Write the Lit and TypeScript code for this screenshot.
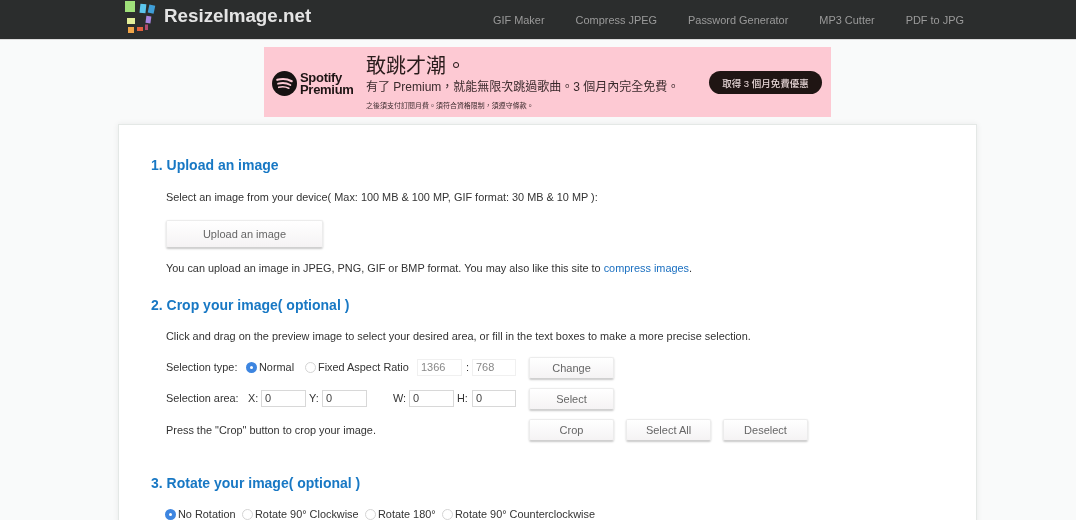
import { LitElement, html, css } from "lit";
import { customElement } from "lit/decorators.js";

@customElement("app-root")
export class AppRoot extends LitElement {
  static styles = css`
    :host { display: block; height: 520px; overflow: hidden; background: #f9fafa; font-family: "Liberation Sans", Arial, sans-serif; color: #333; font-size: 11px; filter: blur(0.3px); }
    .top { height: 39px; background: #2b2d2d; border-bottom: 1px solid #dcdcdc; display: flex; align-items: center; position: relative; box-sizing: content-box; }
    .logo { margin-left: 124px; width: 36px; height: 36px; flex: none; align-self: flex-start; }
    .brand { margin-left: 4px; font-size: 18.8px; font-weight: bold; color: #e4e4e4; position: relative; top: -4px; }
    nav { margin-left: auto; margin-right: 112px; display: flex; gap: 31px; font-size: 10.95px; color: #9a9a9a; }
    .ad { margin: 7px 0 0 264px; width: 567px; height: 70px; background: #fdc9d3; display: flex; align-items: center; box-sizing: border-box; padding-left: 8px; color: #2a1c1c; position: relative; }
    .spot { width: 25px; height: 25px; flex: none; margin-top: 3px; }
    .premium { margin-left: 3px; font-size: 13px; line-height: 12px; font-weight: bold; margin-top: 3px; color: #1d1414; letter-spacing: -0.3px; width: 58px; }
    .copy { margin-left: 8px; font-family: "Noto Sans CJK TC", "Liberation Sans", sans-serif; display: flex; flex-direction: column; margin-top: -2px; }
    .h { font-size: 20px; line-height: 26px; }
    .s { font-family: "Liberation Sans", "Noto Sans CJK TC", sans-serif; font-size: 12px; line-height: 16px; color: #3a2a2c; margin-top: 1px; }
    .f { font-size: 6.9px; line-height: 10px; margin-top: 5px; color: #3a2a2c; letter-spacing: 0.1px; }
    .cta { position: absolute; left: 445px; top: 24px; width: 113px; height: 23px; border-radius: 12px; background: #1f1513; color: #e5d5d5; font-family: "Liberation Sans", "Noto Sans CJK TC", sans-serif; font-size: 9.5px; display: flex; align-items: center; justify-content: center; font-weight: 500; }
    .card { margin: 7px 99px 0 118px; background: #fff; border: 1px solid #e4e8e6; border-bottom: 0; padding: 31px 32px 0; height: 400px; box-sizing: border-box; box-shadow: 0 0 6px rgba(0,0,0,.07); }
    h2 { margin: 0; font-size: 14px; line-height: 18px; font-weight: bold; color: #1878c4; }
    .body { padding-left: 15px; }
    p { margin: 0; line-height: 14px; font-size: 10.9px; }
    .intro { margin-top: 16px; }
    .lead { margin: 15px 0 14px; }
    a { color: #1a6fc0; text-decoration: none; }
    .btn { width: 85px; height: 22px; flex: none; background: linear-gradient(#fff, #f5f3f4); border: 1px solid #ececec; border-bottom-color: #d0d0d0; border-radius: 2px; box-shadow: 0 1px 2px rgba(0,0,0,.22); color: #666; font-size: 11px; display: flex; align-items: center; justify-content: center; box-sizing: border-box; }
    .btn.big { width: 157px; height: 28px; margin: 16px 0 13px; }
    .sec2 { margin-top: 21px; }
    .sec3 { margin-top: 33px; }
    .row { display: flex; align-items: center; height: 22px; margin-bottom: 9px; }
    .row.last { margin-bottom: 0; }
    .left { width: 363px; flex: none; display: flex; align-items: center; font-size: 10.9px; margin-bottom: 2px; }
    .row.last .left { margin-bottom: 0; }
    .left > * { flex: none; }
    .btns { display: flex; gap: 12px; }
    input { box-sizing: border-box; height: 17px; padding: 0 0 0 3px; margin: 0; border: 1px solid #d8d8d8; font: 11px "Liberation Sans", Arial, sans-serif; color: #444; width: 45px; background: #fff; outline: none; border-radius: 0; }
    input.dim { border-color: #f0f0f0; color: #888; }
    input.w44 { width: 44px; }
    .radio { width: 11px; height: 11px; border-radius: 50%; border: 1px solid #d4d4d4; box-sizing: border-box; background: #fff; flex: none; }
    .radio.on { border: 4px solid #3d85e0; }
    .rot { display: flex; align-items: center; margin: 15px 0 0 -1px; height: 14px; font-size: 10.9px; }
    .lbl { margin-left: 2px; }
    .l1 { width: 80px; } .l2 { width: 46px; } .l3 { width: 99px; } .colon { margin-left: 4px; width: 6px; }
    .a { width: 82px; } .xy { width: 13px; } .w { width: 16px; margin-left: 26px; } .h2l { width: 15px; margin-left: 3px; } .y { width: 13px; margin-left: 3px; }
    .r1 { width: 64px; } .r2 { width: 110px; } .r3 { width: 64px; }
  `;

  render() {
    return html`
      <div class="top">
        <svg class="logo" viewBox="0 0 36 36">
          <rect x="1" y="1" width="10" height="11" fill="#9fe07a"/>
          <rect x="16" y="4" width="6" height="9" fill="#5cc6ee" transform="rotate(6 19 8)"/>
          <rect x="24.500" y="5" width="6" height="8" fill="#3f9ed8" transform="rotate(12 27 9)"/>
          <rect x="3" y="18" width="8" height="6" fill="#e2ee9a"/>
          <rect x="22" y="16" width="5" height="7" fill="#a784e0" transform="rotate(8 24 19)"/>
          <rect x="4" y="27" width="6" height="6" fill="#f0a548"/>
          <rect x="13" y="27" width="6" height="4" fill="#e2603c"/>
          <rect x="21" y="24.500" width="3" height="5.500" fill="#b04a70"/>
        </svg>
        <div class="brand">ResizeImage.net</div>
        <nav><span>GIF Maker</span><span>Compress JPEG</span><span>Password Generator</span><span>MP3 Cutter</span><span>PDF to JPG</span></nav>
      </div>
      <div class="ad">
        <svg class="spot" viewBox="0 0 26 26">
          <circle cx="13" cy="13" r="13" fill="#171212"/>
          <g fill="none" stroke="#fdc9d3" stroke-linecap="round">
            <path d="M5.500 9.200c5-1.500 10.500-1 15 1.400" stroke-width="2.200"/>
            <path d="M6.300 13.200c4.200-1.200 9-.8 12.800 1.300" stroke-width="1.900"/>
            <path d="M7 17c3.500-.9 7.300-.6 10.500 1" stroke-width="1.600"/>
          </g>
        </svg>
        <div class="premium">Spotify<br />Premium</div>
        <div class="copy">
          <div class="h">敢跳才潮。</div>
          <div class="s">有了 Premium，就能無限次跳過歌曲。3 個月內完全免費。</div>
          <div class="f">之後須支付訂閱月費。須符合資格限制，須遵守條款。</div>
        </div>
        <div class="cta">取得 3 個月免費優惠</div>
      </div>
      <div class="card">
        <h2>1. Upload an image</h2>
        <div class="body">
          <p class="intro">Select an image from your device( Max: 100 MB &amp; 100 MP, GIF format: 30 MB &amp; 10 MP ):</p>
          <div class="btn big">Upload an image</div>
          <p>You can upload an image in JPEG, PNG, GIF or BMP format. You may also like this site to <a>compress images</a>.</p>
        </div>
        <h2 class="sec2">2. Crop your image( optional )</h2>
        <div class="body">
          <p class="lead">Click and drag on the preview image to select your desired area, or fill in the text boxes to make a more precise selection.</p>
          <div class="row">
            <div class="left">
              <span class="l1">Selection type:</span>
              <span class="radio on"></span><span class="l2 lbl">Normal</span>
              <span class="radio"></span><span class="l3 lbl">Fixed Aspect Ratio</span>
              <input class="dim" value="1366" />
              <span class="colon">:</span>
              <input class="dim w44" value="768" />
            </div>
            <div class="btn">Change</div>
          </div>
          <div class="row">
            <div class="left">
              <span class="a">Selection area:</span>
              <span class="xy">X:</span><input value="0" />
              <span class="y">Y:</span><input value="0" />
              <span class="w">W:</span><input value="0" />
              <span class="h2l">H:</span><input class="w44" value="0" />
            </div>
            <div class="btn">Select</div>
          </div>
          <div class="row last">
            <div class="left"><span>Press the "Crop" button to crop your image.</span></div>
            <div class="btns"><div class="btn">Crop</div><div class="btn">Select All</div><div class="btn">Deselect</div></div>
          </div>
        </div>
        <h2 class="sec3">3. Rotate your image( optional )</h2>
        <div class="body">
          <div class="rot">
            <span class="radio on"></span><span class="r1 lbl">No Rotation</span>
            <span class="radio"></span><span class="r2 lbl">Rotate 90° Clockwise</span>
            <span class="radio"></span><span class="r3 lbl">Rotate 180°</span>
            <span class="radio"></span><span class="lbl">Rotate 90° Counterclockwise</span>
          </div>
        </div>
      </div>
    `;
  }
}
